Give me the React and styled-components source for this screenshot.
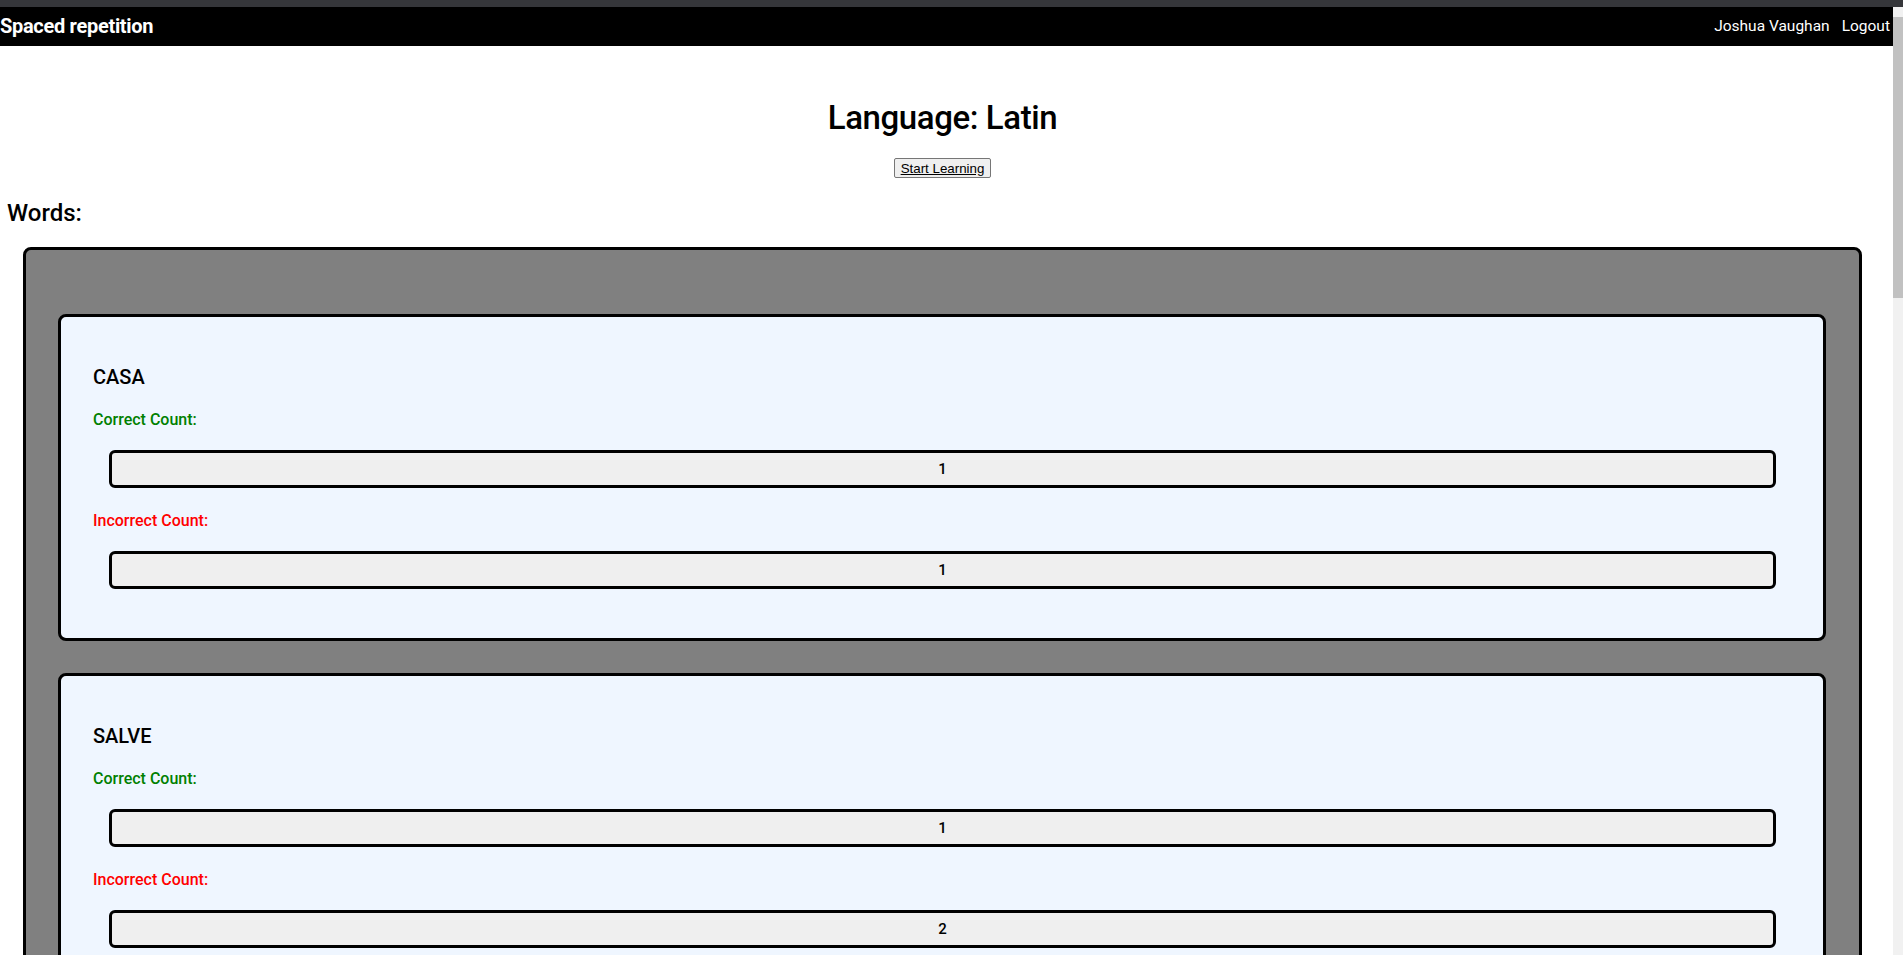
import React from 'react';
import styled, { createGlobalStyle } from 'styled-components';

const words = [
  { original: 'CASA', correct: 1, incorrect: 1 },
  { original: 'SALVE', correct: 1, incorrect: 2 },
  { original: 'AMICUS', correct: 0, incorrect: 0 },
  { original: 'AQUA', correct: 0, incorrect: 0 },
  { original: 'VITA', correct: 0, incorrect: 0 },
  { original: 'LIBER', correct: 0, incorrect: 0 },
  { original: 'TERRA', correct: 0, incorrect: 0 },
];

const App = () => {
  return (
    <>
      <GlobalStyle />
      <TopStrip />
      <Page>
        <Header>
          <Brand>Spaced repetition</Brand>
          <Nav>
            <NavText>Joshua Vaughan</NavText>
            <NavLink href="#">Logout</NavLink>
          </Nav>
        </Header>
        <Main>
          <Title>Language: Latin</Title>
          <StartRow>
            <StartButton>Start Learning</StartButton>
          </StartRow>
          <SectionTitle>Words:</SectionTitle>
          <WordList>
            {words.map((w) => (
              <WordCard key={w.original}>
                <WordName>{w.original}</WordName>
                <CountLabel correct>Correct Count:</CountLabel>
                <CountBox>{w.correct}</CountBox>
                <CountLabel>Incorrect Count:</CountLabel>
                <CountBox>{w.incorrect}</CountBox>
              </WordCard>
            ))}
          </WordList>
        </Main>
      </Page>
      <ScrollTrack>
        <ScrollThumb />
      </ScrollTrack>
    </>
  );
};

export default App;

const GlobalStyle = createGlobalStyle`
  html, body {
    margin: 0;
    padding: 0;
    background: #fff;
    font-family: Roboto, 'Noto Sans', sans-serif;
  }
`;

const TopStrip = styled.div`
  height: 7px;
  background-color: #35363a;
`;

const Page = styled.div`
  width: 1893px;
`;

const ScrollTrack = styled.div`
  position: fixed;
  top: 7px;
  right: 0;
  bottom: 0;
  width: 10px;
  background-color: #f1f1f1;
`;

const ScrollThumb = styled.div`
  margin-top: 10px;
  height: 281px;
  background-color: #c1c1c1;
`;

const Header = styled.header`
  height: 39px;
  background-color: #000;
  color: #fff;
  display: flex;
  align-items: center;
  justify-content: space-between;
  padding-right: 3px;
`;

const Brand = styled.span`
  font-size: 20px;
  font-weight: 700;
  letter-spacing: -0.3px;
  line-height: 1;
  margin-top: -2px;
`;

const Nav = styled.nav`
  display: flex;
  align-items: center;
  gap: 12px;
`;

const NavText = styled.span`
  font-size: 15.5px;
  line-height: 1;
`;

const NavLink = styled.a`
  font-size: 15.5px;
  line-height: 1;
  color: #fff;
  text-decoration: none;
`;

const Main = styled.main`
  width: 1885px;
  display: flex;
  flex-direction: column;
`;

const Title = styled.h1`
  margin: 55px 0 0;
  text-align: center;
  font-size: 33px;
  font-weight: 500;
  letter-spacing: -0.4px;
  line-height: 1;
  color: #000;
`;

const StartRow = styled.div`
  display: flex;
  justify-content: center;
  margin-top: 24px;
`;

const StartButton = styled.button`
  font-family: 'Liberation Sans', Arial, sans-serif;
  font-size: 13.33px;
  text-decoration: underline;
  height: 20px;
  padding: 1px 6px;
  color: #000;
  background-color: #efefef;
  border: 1px solid #767676;
  border-radius: 2px;
`;

const SectionTitle = styled.h2`
  margin: 23px 0 0 7px;
  font-size: 24px;
  font-weight: 500;
  line-height: 1;
  color: #000;
`;

const WordList = styled.section`
  margin: 22px 23px 0;
  padding: 64px 33px 32px 32px;
  background-color: #808080;
  border: 3px solid #000;
  border-radius: 8px;
  display: flex;
  flex-direction: column;
  gap: 32px;
`;

const WordCard = styled.article`
  background-color: #eff6ff;
  border: 3px solid #000;
  border-radius: 8px;
  padding: 50px 32px 49px;
  display: flex;
  flex-direction: column;
`;

const WordName = styled.h3`
  margin: 0;
  font-size: 20px;
  font-weight: 500;
  line-height: 1;
  color: #000;
`;

const CountLabel = styled.p`
  margin: 25px 0 0;
  font-size: 16px;
  font-weight: 500;
  line-height: 1;
  color: ${(p) => (p.correct ? '#008000' : '#ff0000')};
`;

const CountBox = styled.div`
  margin: 22px 15px 0 16px;
  height: 32px;
  display: flex;
  align-items: center;
  justify-content: center;
  background-color: #efefef;
  border: 3px solid #000;
  border-radius: 6px;
  font-size: 15px;
  font-weight: 500;
  color: #000;
`;
